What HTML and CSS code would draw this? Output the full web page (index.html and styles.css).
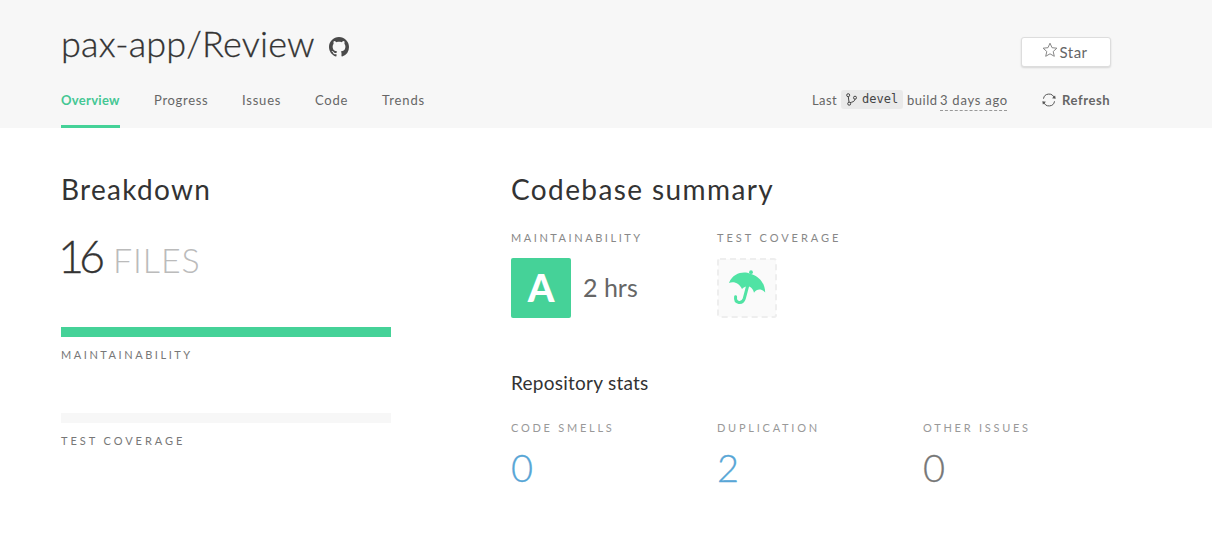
FILE: index.html
```html
<!DOCTYPE html>
<html lang="en">
<head>
<meta charset="utf-8">
<title>pax-app/Review</title>
<link rel="stylesheet" href="styles.css">
</head>
<body>
<header class="header">
  <div class="container">
    <div class="title-row">
      <h1 class="repo-name">pax-app/Review</h1>
      <svg class="github" viewBox="0 0 16 16"><path d="M8 0C3.58 0 0 3.58 0 8c0 3.54 2.29 6.53 5.47 7.59.4.07.55-.17.55-.38 0-.19-.01-.82-.01-1.49-2.01.37-2.53-.49-2.69-.94-.09-.23-.48-.94-.82-1.13-.28-.15-.68-.52-.01-.53.63-.01 1.08.58 1.23.82.72 1.21 1.87.87 2.33.66.07-.52.28-.87.51-1.07-1.78-.2-3.64-.89-3.64-3.95 0-.87.31-1.59.82-2.15-.08-.2-.36-1.02.08-2.12 0 0 .67-.21 2.2.82.64-.18 1.32-.27 2-.27s1.36.09 2 .27c1.53-1.04 2.2-.82 2.2-.82.44 1.1.16 1.92.08 2.12.51.56.82 1.27.82 2.15 0 3.07-1.87 3.75-3.65 3.95.29.25.54.73.54 1.48 0 1.07-.01 1.93-.01 2.2 0 .21.15.46.55.38A8.01 8.01 0 0 0 16 8c0-4.42-3.58-8-8-8z"/></svg>
      <button class="star-button"><svg class="star-icon" viewBox="0 0 16 16"><path d="M8 1.2l2 4.5 4.9.5-3.7 3.3 1.1 4.8L8 11.8l-4.300 2.500 1.100-4.800L1.100 6.200l4.900-.5z"/></svg><span>Star</span></button>
    </div>
    <div class="nav-row">
      <nav class="tabs">
        <a class="tab tab-active">Overview</a>
        <a class="tab tab-progress">Progress</a>
        <a class="tab tab-issues">Issues</a>
        <a class="tab tab-code">Code</a>
        <a class="tab tab-trends">Trends</a>
      </nav>
      <div class="build">
        <span class="last">Last</span>
        <span class="branch"><svg class="branch-icon" viewBox="0 0 11 13"><circle cx="2.200" cy="2.200" r="1.500"/><circle cx="3.200" cy="10.700" r="1.500"/><circle cx="9" cy="4.700" r="1.500"/><path d="M2.300 3.700l.7 5.500M9 6.200c-.2 2.500-3.200 3-4.900 3.400"/></svg>devel</span>
        <span class="built">build</span>
        <span class="ago">3 days ago</span>
      </div>
      <a class="refresh"><svg class="refresh-icon" viewBox="0 0 14 14"><path d="M1.500 5.700A5.500 5.500 0 0 1 12.200 5M12.500 8.300A5.500 5.500 0 0 1 1.800 9"/><path class="arrowhead" d="M10 5.300l3.700.5-.6-3.400zM4 8.700l-3.700-.5.6 3.400z"/></svg><span>Refresh</span></a>
    </div>
  </div>
</header>
<main class="container content">
  <section class="breakdown">
    <h2 class="heading heading-breakdown">Breakdown</h2>
    <p class="file-count"><span class="count">16</span><span class="files">FILES</span></p>
    <div class="bar bar-full"></div>
    <div class="label dark">MAINTAINABILITY</div>
    <div class="bar bar-empty"></div>
    <div class="label dark wide">TEST COVERAGE</div>
  </section>
  <section class="summary">
    <h2 class="heading heading-summary">Codebase summary</h2>
    <div class="columns ratings">
      <div>
        <div class="label">MAINTAINABILITY</div>
        <div class="rating"><span class="grade">A</span><span class="time">2 hrs</span></div>
      </div>
      <div>
        <div class="label wide">TEST COVERAGE</div>
        <div class="coverage"><svg class="coverage-box" viewBox="0 0 60 60"><rect class="dashed" x="1" y="1" width="58" height="58" rx="2"/><circle class="leaf" cx="34" cy="14.200" r="1.900"/><path class="leaf" d="M12 25C16 14.500 27 13 33.200 15.700C42 18 48 25 48.200 34.500C44.500 30.500 40 30.500 37 34.800C35.500 28.500 30 26 25 31C22.500 25.500 17 22.800 12 25z"/><path class="handle" d="M30.600 28L27.300 40.500C25.300 46.500 17.600 45.500 18.600 38.700"/></svg></div>
      </div>
    </div>
    <h3 class="subheading">Repository stats</h3>
    <div class="columns">
      <div><div class="label light">CODE SMELLS</div><div class="stat">0</div></div>
      <div><div class="label light">DUPLICATION</div><div class="stat">2</div></div>
      <div><div class="label light">OTHER ISSUES</div><div class="stat muted">0</div></div>
    </div>
  </section>
</main>
</body>
</html>
```
FILE: styles.css
```css
* { box-sizing: border-box; }
body { margin: 0; background: #fff; color: #333; font-family: Lato, "Liberation Sans", sans-serif; }
h1, h2, h3, p { margin: 0; font-weight: 400; }
.header { height: 128px; background: #f7f7f7; }
.container { width: 1050px; margin-left: 61px; }
.title-row { display: flex; height: 80px; padding-top: 21px; }
.repo-name { width: 268px; font-size: 36px; font-weight: 300; line-height: 44px; letter-spacing: 0.2px; white-space: nowrap; -webkit-text-stroke: .3px #333; }
.github { width: 20px; height: 20px; margin-top: 16px; fill: #4a4a4a; }
.star-button { display: flex; align-items: center; justify-content: center; gap: 1px; width: 90px; height: 30px; margin: 16px 0 0 auto; padding: 0 2px 0 0; border: 1px solid #ddd; border-radius: 3px; background: #fff; box-shadow: 0 1px 2px #0002; color: #666; font: 15px/20px Lato, sans-serif; letter-spacing: .5px; }
.star-icon { width: 16px; height: 16px; margin-top: -4px; fill: none; stroke: #888; }
.nav-row { display: flex; height: 48px; font-size: 13px; line-height: 20px; color: #666; }
.tabs { display: flex; flex: none; width: 751px; }
.tab { flex: none; height: 48px; padding-top: 10px; margin-right: 34px; white-space: nowrap; }
.tab-active { width: 59px; border-bottom: 3px solid #45d298; color: #45c794; font-weight: 700; letter-spacing: .3px; }
.tab-progress { width: 54px; letter-spacing: .7px; }
.tab-issues { width: 39px; letter-spacing: .8px; }
.tab-code { width: 33px; letter-spacing: .8px; }
.tab-trends { margin: 0; letter-spacing: .9px; }
.build { display: flex; flex: none; width: 230px; padding-top: 10px; white-space: nowrap; }
.last { width: 29px; letter-spacing: .4px; }
.branch { display: flex; align-items: center; gap: 5px; width: 62px; height: 19px; padding-left: 5px; border-radius: 3px; background: #eaeaea; color: #444; font: 12px/19px "DejaVu Sans Mono", monospace; }
.branch-icon { width: 11px; height: 13px; fill: none; stroke: #444; }
.built { width: 33px; margin-left: 4px; letter-spacing: .5px; }
.ago { width: 67px; height: 21px; border-bottom: 1px dashed #999; letter-spacing: .75px; }
.refresh { display: flex; gap: 6px; padding-top: 10px; font-weight: 700; letter-spacing: .6px; }
.refresh-icon { width: 14px; height: 14px; margin-top: 3px; fill: none; stroke: #555; }
.arrowhead { fill: #555; stroke: none; }
.content { display: flex; padding-top: 43px; }
.breakdown { flex: none; width: 450px; }
.heading { font-size: 28px; line-height: 36px; height: 58px; white-space: nowrap; }
.heading-breakdown { letter-spacing: 1.3px; }
.heading-summary { letter-spacing: 1.4px; }
.file-count { display: flex; align-items: baseline; height: 98px; line-height: 54px; white-space: nowrap; }
.count { width: 55px; margin-left: -3px; font-size: 45px; font-weight: 300; letter-spacing: -5px; -webkit-text-stroke: .3px #333; }
.files { color: #bbb; font-size: 34px; font-weight: 300; letter-spacing: .9px; }
.bar { width: 330px; height: 10px; margin-bottom: 10px; }
.bar-full { background: #45d298; }
.bar-empty { margin-top: 50px; background: #f7f7f7; }
.label { height: 16px; font-size: 11px; line-height: 16px; letter-spacing: 2.55px; color: #888; white-space: nowrap; }
.dark { color: #777; }
.wide { letter-spacing: 2.95px; }
.light { color: #999; letter-spacing: 2.75px; }
.summary { flex: none; width: 620px; }
.columns { display: grid; grid-template-columns: 206px 206px 206px; }
.ratings { padding-top: 1px; }
.rating { display: flex; gap: 12px; margin-top: 12px; }
.grade { width: 60px; height: 60px; border-radius: 2px; background: #45d298; color: #fff; text-align: center; font-size: 38px; line-height: 58px; font-weight: 900; }
.time { font-size: 25px; line-height: 59px; color: #666; }
.coverage { height: 60px; margin-top: 12px; }
.coverage-box { display: block; width: 60px; height: 60px; }
.dashed { fill: #fafafa; stroke: #eee; stroke-width: 2; stroke-dasharray: 6 4; }
.leaf { fill: #50e3a4; }
.handle { fill: none; stroke: #50e3a4; stroke-width: 3; stroke-linecap: round; }
.subheading { margin: 53px 0 25px; font-size: 19px; line-height: 24px; letter-spacing: .25px; }
.stat { margin-top: 7px; font-size: 38px; line-height: 48px; font-weight: 300; color: #58a6d6; -webkit-text-stroke: .3px; }
.muted { color: #777; }
```
